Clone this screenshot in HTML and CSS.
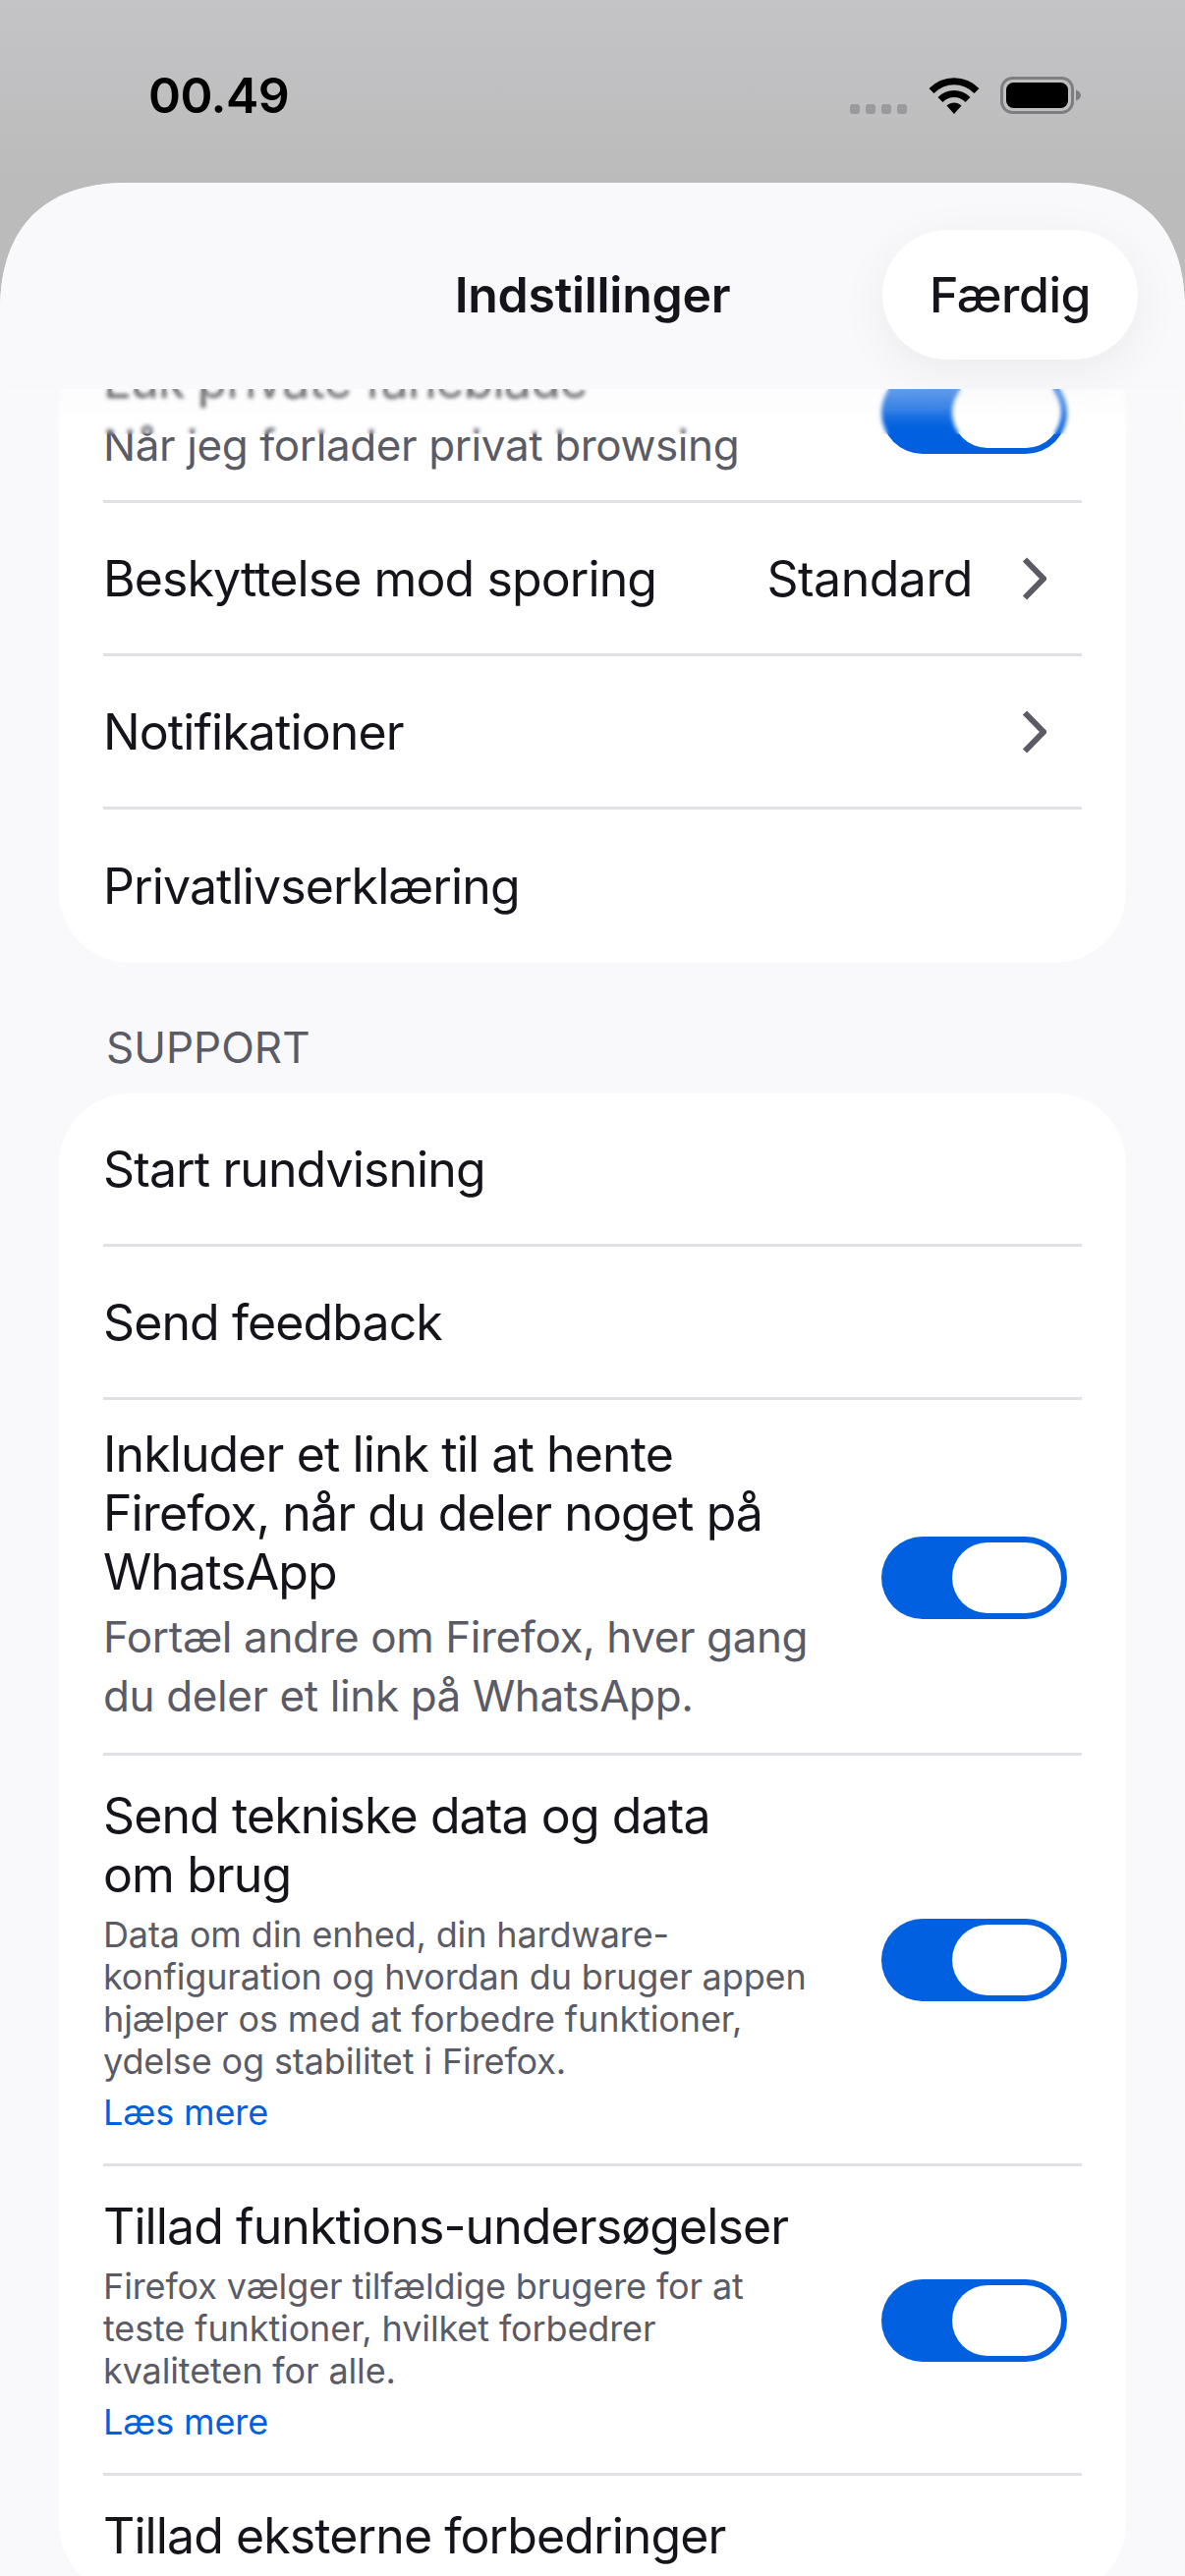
FILE: index.html
```html
<!DOCTYPE html>
<html lang="da">
<head>
<meta charset="utf-8">
<title>Indstillinger</title>
<link rel="stylesheet" href="styles.css">
</head>
<body>
<div class="status">
  <span class="time">00.49</span>
  <div class="status-icons">
    <div class="dots"><i></i><i></i><i></i><i></i></div>
    <svg class="wifi" viewBox="0 0 52 38"><path d="M3 14.5C16 1.5 36 1.5 49 14.5" fill="none" stroke="#000" stroke-width="7"/><path d="M12 23.5C20 15.5 32 15.5 40 23.5" fill="none" stroke="#000" stroke-width="7"/><path d="M18.5 29.5C23 25.5 29 25.5 33.5 29.5L26 38Z" fill="#000"/></svg>
    <svg class="battery" viewBox="0 0 82 38"><rect x="1.5" y="1.5" width="72" height="35" rx="11" fill="none" stroke="#7e7e80" stroke-width="3"/><rect x="6" y="6" width="63" height="26" rx="7.5" fill="#000"/><path d="M77 13.500C80 14.500 82 16.500 82 19C82 21.500 80 23.500 77 24.500Z" fill="#7e7e80"/></svg>
  </div>
</div>
<main class="sheet">
  <header class="nav">
    <h1 class="title">Indstillinger</h1>
    <button class="done">Færdig</button>
  </header>
  <div class="scroll">
    <div class="fade"></div>
    <div class="content">
      <section class="card">
        <div class="row row-toggle first">
          <div class="text">
            <div class="label">Luk private faneblade</div>
            <div class="sub">Når jeg forlader privat browsing</div>
          </div>
          <div class="toggle"><span class="knob"></span></div>
        </div>
        <div class="row simple">
          <div class="label">Beskyttelse mod sporing</div>
          <div class="detail">Standard</div>
          <svg class="chev" viewBox="0 0 25 44"><path d="M3 2.500L22 22L3 41.500" fill="none" stroke="#5b5b66" stroke-width="6"/></svg>
        </div>
        <div class="row simple">
          <div class="label">Notifikationer</div>
          <svg class="chev" viewBox="0 0 25 44"><path d="M3 2.500L22 22L3 41.500" fill="none" stroke="#5b5b66" stroke-width="6"/></svg>
        </div>
        <div class="row simple">
          <div class="label">Privatlivserklæring</div>
        </div>
      </section>
      <h2 class="section-title">SUPPORT</h2>
      <section class="card">
        <div class="row simple"><div class="label">Start rundvisning</div></div>
        <div class="row simple"><div class="label">Send feedback</div></div>
        <div class="row row-toggle share">
          <div class="text">
            <div class="label">Inkluder et link til at hente Firefox, når du deler noget på WhatsApp</div>
            <div class="sub">Fortæl andre om Firefox, hver gang du deler et link på WhatsApp.</div>
          </div>
          <div class="toggle"><span class="knob"></span></div>
        </div>
        <div class="row row-toggle detailed">
          <div class="text">
            <div class="label">Send tekniske data og data om brug</div>
            <div class="small">Data om din enhed, din hardware-konfiguration og hvordan du bruger appen hjælper os med at forbedre funktioner, ydelse og stabilitet i Firefox.</div>
            <a class="more">Læs mere</a>
          </div>
          <div class="toggle"><span class="knob"></span></div>
        </div>
        <div class="row row-toggle detailed">
          <div class="text">
            <div class="label">Tillad funktions-undersøgelser</div>
            <div class="small">Firefox vælger tilfældige brugere for at teste funktioner, hvilket forbedrer kvaliteten for alle.</div>
            <a class="more">Læs mere</a>
          </div>
          <div class="toggle"><span class="knob"></span></div>
        </div>
        <div class="row row-toggle detailed">
          <div class="text">
            <div class="label">Tillad eksterne forbedringer</div>
          </div>
        </div>
      </section>
    </div>
  </div>
</main>
</body>
</html>
```
FILE: styles.css
```css
* { box-sizing: border-box; }
html, body { margin: 0; padding: 0; }
body {
  width: 1206px;
  height: 2622px;
  overflow: hidden;
  background: linear-gradient(#c4c4c6, #bbbbbc 186px);
  font-family: Inter, "Liberation Sans", sans-serif;
  display: flex;
  flex-direction: column;
  color: #15141a;
}
.status {
  height: 186px;
  flex: none;
  display: flex;
  justify-content: space-between;
  padding: 0 106px 0 151px;
}
.time {
  font-size: 50px;
  font-weight: 600;
  color: #000;
  line-height: 60px;
  margin-top: 67px;
  letter-spacing: -0.5px;
}
.status-icons {
  display: flex;
  align-items: flex-end;
  height: 116px;
}
.dots { display: flex; gap: 6px; margin-right: 22px; }
.dots i { width: 10px; height: 10px; border-radius: 3px; background: #9a9a9c; display: block; }
.wifi { width: 52px; height: 38px; margin-right: 21px; display: block; }
.battery { width: 82px; height: 38px; display: block; }
.sheet {
  flex: 1;
  min-height: 0;
  display: flex;
  flex-direction: column;
  background: #f9f9fb;
  clip-path: path("M0 130C0 45 45 0 130 0H1076C1161 0 1206 45 1206 130V2436H0Z");
  overflow: hidden;
}
.nav {
  height: 210px;
  flex: none;
  display: flex;
  align-items: flex-start;
  justify-content: flex-end;
  padding: 48px 48px 0 0;
  position: relative;
  background: #f9f9fb;
}
.title {
  position: absolute;
  left: 0;
  right: 0;
  top: 84px;
  margin: 0;
  text-align: center;
  font-size: 50px;
  line-height: 60px;
  font-weight: 600;
  letter-spacing: -0.3px;
}
.done {
  width: 260px;
  height: 132px;
  border: 0;
  border-radius: 66px;
  background: #fff;
  color: #15141a;
  font: 500 50px/60px Inter, "Liberation Sans", sans-serif;
  letter-spacing: -0.5px;
  padding: 0;
  box-shadow: 0 12px 50px rgba(0, 0, 0, 0.06);
  position: relative;
  z-index: 2;
}
.scroll {
  flex: 1;
  min-height: 0;
  overflow: hidden;
  position: relative;
}
.fade {
  position: absolute;
  inset: 0 0 auto 0;
  height: 46px;
  z-index: 1;
  background: linear-gradient(rgba(249, 249, 251, 0.4), rgba(249, 249, 251, 0));
  backdrop-filter: blur(2px);
  -webkit-mask-image: linear-gradient(#000 45%, transparent);
  mask-image: linear-gradient(#000 45%, transparent);
}
.content {
  padding: 0 60px;
  margin-top: -54px;
}
.card {
  background: #fff;
  border-radius: 72px;
  padding: 0 45px;
}
.row {
  display: flex;
  align-items: center;
  border-bottom: 3px solid #e0e0e6;
}
.row:last-child { border-bottom: 0; }
.simple { height: 156px; padding-right: 36px; }
.simple .label { flex: 1; max-width: none; }
.row-toggle { justify-content: space-between; padding: 25px 15px 28px 0; }
.first { padding-top: 15px; padding-bottom: 26px; }
.detailed { padding-top: 31px; padding-bottom: 30px; }
.share .toggle { margin-top: 6px; }
.text { width: 725px; }
.label {
  font-size: 50px;
  line-height: 60px;
  font-weight: 400;
  letter-spacing: -0.9px;
  max-width: 700px;
}
.sub { font-size: 44px; line-height: 60px; letter-spacing: -0.4px; color: #5b5b66; margin-top: 6px; }
.small { font-size: 36px; line-height: 43px; letter-spacing: -0.12px; color: #5b5b66; margin-top: 10px; }
.more { display: block; font-size: 36px; line-height: 43px; letter-spacing: -0.12px; color: #0060df; margin-top: 9px; }
.detail { font-size: 50px; line-height: 60px; letter-spacing: -0.5px; margin-right: 50px; }
.chev { width: 25px; height: 44px; flex: none; }
.toggle {
  width: 189px;
  height: 84px;
  flex: none;
  border-radius: 42px;
  background: #0060df;
  padding: 6px;
  display: flex;
  justify-content: flex-end;
}
.knob { width: 111px; height: 72px; border-radius: 36px; background: #fff; display: block; }
.section-title {
  margin: 0;
  padding: 61px 0 22px 48px;
  font-size: 44px;
  line-height: 50px;
  font-weight: 400;
  color: #5b5b66;
}
```
